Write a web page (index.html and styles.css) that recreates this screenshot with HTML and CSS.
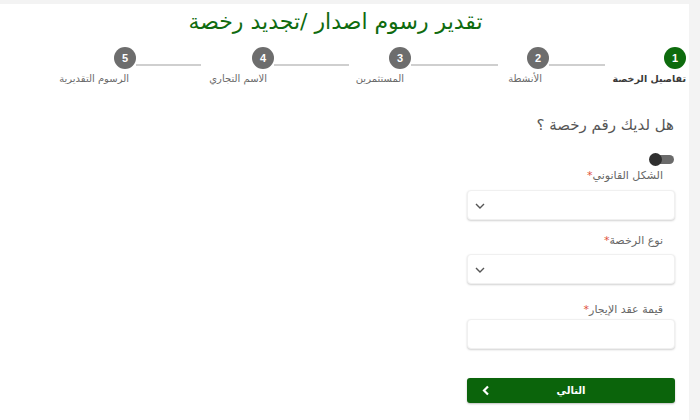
FILE: index.html
```html
<!DOCTYPE html>
<html lang="ar" dir="rtl">
<head>
<meta charset="utf-8">
<link rel="stylesheet" href="styles.css">
</head>
<body>
<div class="card">
  <h1 class="title">تقدير رسوم اصدار /تجديد رخصة</h1>
  <div class="stepper">
    <div class="step step-1 active">
      <span class="dot">1</span>
      <span class="step-label">تفاصيل الرخصة</span>
    </div>
    <span class="line line-2"></span>
    <div class="step step-2">
      <span class="dot">2</span>
      <span class="step-label">الأنشطة</span>
    </div>
    <span class="line line-3"></span>
    <div class="step step-3">
      <span class="dot">3</span>
      <span class="step-label">المستثمرين</span>
    </div>
    <span class="line line-4"></span>
    <div class="step step-4">
      <span class="dot">4</span>
      <span class="step-label">الاسم التجاري</span>
    </div>
    <span class="line line-5"></span>
    <div class="step step-5">
      <span class="dot">5</span>
      <span class="step-label">الرسوم التقديرية</span>
    </div>
  </div>

  <form class="form">
    <h2 class="question">هل لديك رقم رخصة ؟</h2>
    <div class="toggle"><span class="track"></span><span class="knob"></span></div>

    <label class="field-label label-1">الشكل القانوني<span class="req">*</span></label>
    <div class="control select control-1">
      <svg class="chev" width="10" height="6" viewBox="0 0 10 6"><path d="M1 1l4 4 4-4" fill="none" stroke="#555" stroke-width="1.4"/></svg>
    </div>

    <label class="field-label label-2">نوع الرخصة<span class="req">*</span></label>
    <div class="control select control-2">
      <svg class="chev" width="10" height="6" viewBox="0 0 10 6"><path d="M1 1l4 4 4-4" fill="none" stroke="#555" stroke-width="1.4"/></svg>
    </div>

    <label class="field-label label-3">قيمة عقد الإيجار<span class="req">*</span></label>
    <div class="control control-3"></div>

    <button type="button" class="next">
      <span class="next-text">التالي</span>
      <svg class="next-chev" width="8" height="11" viewBox="0 0 8 11"><path d="M6 1.5L2 5.5l4 4" fill="none" stroke="#fff" stroke-width="2.2"/></svg>
    </button>
  </form>
</div>
</body>
</html>
```
FILE: styles.css
```css
html, body {
  margin: 0;
  padding: 0;
}
body {
  background: #f3f3f3;
  font-family: "DejaVu Sans", "Noto Sans", sans-serif;
  width: 700px;
  height: 420px;
  overflow: hidden;
}
.card {
  background: #fff;
  margin-top: 4px;
  margin-right: 11px;
  height: 416px;
  padding-right: 3px;
  box-sizing: border-box;
}
.title {
  margin: 0;
  padding-top: 2px;
  padding-right: 15px;
  height: 34px;
  box-sizing: border-box;
  font-size: 22px;
  line-height: 32px;
  font-weight: normal;
  color: #0f6b0f;
  text-align: center;
}
.stepper {
  display: flex;
  align-items: flex-start;
  margin-top: 9px;
  height: 40px;
}
.step {
  display: flex;
  flex-direction: column;
  align-items: flex-start;
  flex: none;
}
.dot {
  width: 22px;
  height: 22px;
  border-radius: 50%;
  background: #6d6d6d;
  color: #fff;
  font-size: 11px;
  font-weight: bold;
  display: flex;
  align-items: center;
  justify-content: center;
  font-family: "Liberation Sans", sans-serif;
}
.active .dot {
  background: #0d6b0d;
}
.step-label {
  margin-top: 4px;
  margin-right: 7px;
  font-size: 10px;
  color: #6a6a6a;
  white-space: nowrap;
}
.active .step-label {
  margin-right: 0;
  font-size: 9.5px;
  font-weight: bold;
  color: #3a3a3a;
}
.step-1 { width: 73px; }
.step-2 { width: 43px; }
.step-3 { width: 55px; }
.step-4 { width: 66px; }
.step-5 { width: 77px; }
.line {
  height: 2px;
  background: #cfcfcf;
  margin-top: 17px;
  flex: none;
}
.line-2 { width: 56px; margin-right: 8px; }
.line-3 { width: 87px; margin-right: 8px; }
.line-4 { width: 75px; margin-right: 7px; }
.line-5 { width: 65px; margin-right: 7px; }

.form {
  width: 208px;
  margin-right: 11px;
  display: flex;
  flex-direction: column;
  align-items: stretch;
}
.question {
  margin: 27px 1px 0 0;
  font-size: 15px;
  line-height: 22px;
  font-weight: normal;
  color: #555;
}
.toggle {
  position: relative;
  width: 25px;
  height: 13px;
  margin-top: 17px;
  margin-right: 1px;
}
.track {
  position: absolute;
  right: 0;
  top: 2px;
  width: 20px;
  height: 9px;
  border-radius: 5px;
  background: #6b6b6b;
}
.knob {
  position: absolute;
  left: 0;
  top: 0;
  width: 13px;
  height: 13px;
  border-radius: 50%;
  background: #2f2f2f;
}
.field-label {
  margin-right: 12px;
  font-size: 11px;
  line-height: 16px;
  color: #666;
}
.req {
  color: #e0503c;
}
.label-1 { margin-top: 2px; }
.label-2 { margin-top: 13px; }
.label-3 { margin-top: 18px; }
.control {
  height: 30px;
  box-sizing: border-box;
  background: #fff;
  border: 1px solid #f0f0f0;
  border-radius: 4px;
  box-shadow: 0 1px 2px rgba(0,0,0,0.18);
  display: flex;
  align-items: center;
  justify-content: flex-end;
}
.control-1 { margin-top: 6px; }
.control-2 { margin-top: 5px; }
.control-3 { margin-top: 1px; }
.chev {
  margin-left: 7px;
  margin-top: 2px;
}
.next {
  margin-top: 29px;
  height: 25px;
  background: #0b640b;
  border: none;
  border-radius: 3px;
  box-shadow: 0 1px 2px rgba(0,0,0,0.25);
  position: relative;
  display: flex;
  align-items: center;
  justify-content: center;
  font-family: "DejaVu Sans", sans-serif;
  padding: 0;
}
.next-text {
  color: #fff;
  font-weight: bold;
  font-size: 10px;
}
.next-chev {
  position: absolute;
  left: 15px;
  top: 7px;
}
```
